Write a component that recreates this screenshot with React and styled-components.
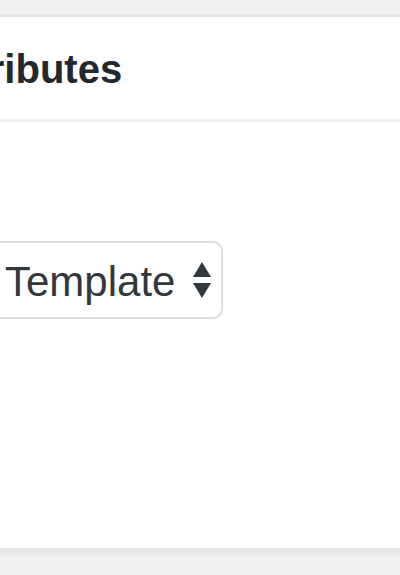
import React from 'react';
import styled, {createGlobalStyle} from 'styled-components';

const GlobalStyle = createGlobalStyle`
  body {
    margin: 0;
    background: #f1f1f1;
    font-family: "Liberation Sans", Arial, sans-serif;
  }
`;

const Page = styled.div`
  height: 575px;
  padding-top: 14px;
  box-sizing: border-box;
  overflow: hidden;
`;

const Panel = styled.div`
  margin: 0 -200px;
  background: #fff;
  border: 2px solid #e2e4e7;
  border-top-width: 3px;
  box-shadow: 0 4px 4px rgba(0, 0, 0, 0.05);
`;

const Header = styled.div`
  height: 105px;
  box-sizing: border-box;
  padding: 2px 0 0 26px;
  display: flex;
  align-items: center;
  border-bottom: 3px solid #eeeeee;
`;

const Title = styled.h2`
  margin: 0;
  font-size: 40px;
  font-weight: 700;
  color: #23282d;
`;

const Body = styled.div`
  height: 426px;
  box-sizing: border-box;
  padding: 119px 0 0 41px;
`;

const Select = styled.div`
  display: inline-flex;
  align-items: center;
  gap: 18px;
  height: 78px;
  box-sizing: border-box;
  padding: 0 10px 0 16px;
  border: 2px solid #dcdcde;
  border-radius: 10px;
  font-size: 42px;
  color: #32373c;
`;

const Label = styled.span`
  padding-top: 4px;
`;

function Arrows() {
  return (
    <svg width="18" height="36" viewBox="0 0 18 36">
      <path d="M9 0 L18 15 L0 15 Z" fill="#32373c" />
      <path d="M0 21 L18 21 L9 36 Z" fill="#32373c" />
    </svg>
  );
}

export default function App() {
  return (
    <>
      <GlobalStyle />
      <Page>
        <Panel>
          <Header>
            <Title>Page Attributes</Title>
          </Header>
          <Body>
            <Select>
              <Label>Default Template</Label>
              <Arrows />
            </Select>
          </Body>
        </Panel>
      </Page>
    </>
  );
}
